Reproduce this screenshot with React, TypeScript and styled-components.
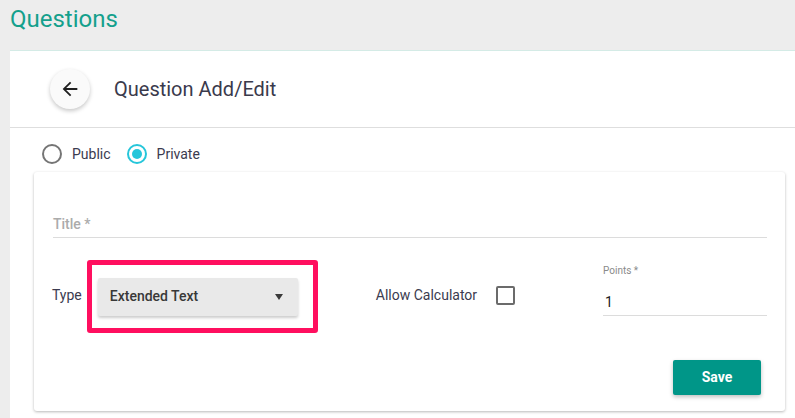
import React from "react";
import styled, { createGlobalStyle } from "styled-components";

const GlobalStyle = createGlobalStyle`
  body {
    margin: 0;
    background: #ededed;
    font-family: Roboto, "Liberation Sans", sans-serif;
    color: #3b3b4f;
  }
`;

const Page = styled.div`
  height: 418px;
  overflow: hidden;
`;

const PageTitle = styled.h1`
  margin: 0;
  height: 50px;
  padding: 4px 10px 0;
  box-sizing: border-box;
  font-size: 24px;
  font-weight: 400;
  line-height: 30px;
  color: #14a08c;
`;

const Panel = styled.div`
  margin-left: 10px;
  background: #fff;
  border-top: 1px solid #d4ebe6;
  height: 368px;
`;

const Header = styled.div`
  display: flex;
  align-items: center;
  gap: 24px;
  height: 76px;
  padding-left: 40px;
  border-bottom: 1px solid #dedede;
`;

const BackButton = styled.button`
  width: 40px;
  height: 40px;
  border: none;
  border-radius: 50%;
  background: #fafafa;
  box-shadow: 0 2px 4px rgba(0, 0, 0, 0.22);
  display: flex;
  align-items: center;
  justify-content: center;
  padding: 0;
  cursor: pointer;
`;

const HeaderTitle = styled.div`
  font-size: 20px;
  color: #3a3a4c;
`;

const RadioRow = styled.div`
  display: flex;
  align-items: center;
  height: 36px;
  padding: 8px 0 0 32px;
  gap: 16px;
`;

const RadioOption = styled.label`
  display: flex;
  align-items: center;
  gap: 10px;
  font-size: 14px;
  color: #3b3b4f;
`;

const RadioCircle = styled.span<{ $checked?: boolean }>`
  width: 20px;
  height: 20px;
  box-sizing: border-box;
  border-radius: 50%;
  border: 2px solid ${(p) => (p.$checked ? "#26c6da" : "#757575")};
  display: flex;
  align-items: center;
  justify-content: center;
  &::after {
    content: "";
    width: 10px;
    height: 10px;
    border-radius: 50%;
    background: ${(p) => (p.$checked ? "#26c6da" : "transparent")};
  }
`;

const Card = styled.div`
  margin-left: 24px;
  width: 751px;
  height: 239px;
  box-sizing: border-box;
  background: #fff;
  border-radius: 3px;
  box-shadow: 0 1px 3px rgba(0, 0, 0, 0.28);
  padding: 40px 18px 16px 19px;
`;

const TitleField = styled.div`
  height: 25px;
  line-height: 25px;
  border-bottom: 1px solid #dcdcdc;
  font-size: 14px;
  font-weight: 500;
  color: #ababab;
`;

const FieldRow = styled.div`
  display: flex;
  align-items: center;
  margin: 22px 0 0 -1px;
  height: 73px;
`;

const RowLabel = styled.span<{ $gap: number }>`
  font-size: 14px;
  color: #3b3b4f;
  margin-right: ${(p) => p.$gap}px;
  padding-bottom: 3px;
`;

const Highlight = styled.div`
  border: 5px solid #ff0f5f;
  border-radius: 3px;
  padding: 13px 15px 12px 6px;
  margin-right: 58px;
`;

const Select = styled.div`
  width: 200px;
  height: 38px;
  box-sizing: border-box;
  background: #e9e9e9;
  border-radius: 2px;
  box-shadow: 0 2px 3px rgba(0, 0, 0, 0.2);
  display: flex;
  align-items: center;
  justify-content: space-between;
  padding: 0 15px 3px 12px;
  font-size: 14px;
  font-weight: 500;
  color: #383838;
`;

const Caret = styled.span`
  width: 0;
  height: 0;
  border-left: 4.5px solid transparent;
  border-right: 4.5px solid transparent;
  border-top: 6px solid #3a3a3a;
  margin-top: 3px;
`;

const Checkbox = styled.span`
  width: 19px;
  height: 19px;
  box-sizing: border-box;
  border: 2px solid #6b6b6b;
  border-radius: 2px;
  margin-bottom: 2px;
`;

const PointsField = styled.div`
  margin-left: auto;
  margin-bottom: 12px;
  width: 164px;
`;

const SmallLabel = styled.div`
  font-size: 10px;
  line-height: 12px;
  color: #8a8a8a;
  margin-bottom: 12px;
`;

const PointsValue = styled.div`
  font-size: 14px;
  line-height: 26px;
  padding-left: 2px;
  color: #222;
  border-bottom: 1px solid #dcdcdc;
`;

const Actions = styled.div`
  display: flex;
  justify-content: flex-end;
  margin-top: 27px;
  padding-right: 6px;
`;

const SaveButton = styled.button`
  width: 88px;
  height: 35px;
  border: none;
  border-radius: 2px;
  background: #009688;
  color: #fff;
  font-family: Roboto, "Liberation Sans", sans-serif;
  font-size: 14px;
  font-weight: 700;
  padding-bottom: 2px;
  box-shadow: 0 2px 4px rgba(0, 0, 0, 0.25);
  cursor: pointer;
`;

export default function App() {
  return (
    <Page>
      <GlobalStyle />
      <PageTitle>Questions</PageTitle>
      <Panel>
        <Header>
          <BackButton aria-label="back">
            <svg width="22" height="22" viewBox="0 0 24 24">
              <path d="M20 11H7.83l5.59-5.59L12 4l-8 8 8 8 1.41-1.41L7.83 13H20v-2z" fill="#1f1f1f" />
            </svg>
          </BackButton>
          <HeaderTitle>Question Add/Edit</HeaderTitle>
        </Header>
        <RadioRow>
          <RadioOption>
            <RadioCircle />
            Public
          </RadioOption>
          <RadioOption>
            <RadioCircle $checked />
            Private
          </RadioOption>
        </RadioRow>
        <Card>
          <TitleField>Title *</TitleField>
          <FieldRow>
            <RowLabel $gap={5}>Type</RowLabel>
            <Highlight>
              <Select>
                Extended Text
                <Caret />
              </Select>
            </Highlight>
            <RowLabel $gap={19}>Allow Calculator</RowLabel>
            <Checkbox />
            <PointsField>
              <SmallLabel>Points *</SmallLabel>
              <PointsValue>1</PointsValue>
            </PointsField>
          </FieldRow>
          <Actions>
            <SaveButton>Save</SaveButton>
          </Actions>
        </Card>
      </Panel>
    </Page>
  );
}
